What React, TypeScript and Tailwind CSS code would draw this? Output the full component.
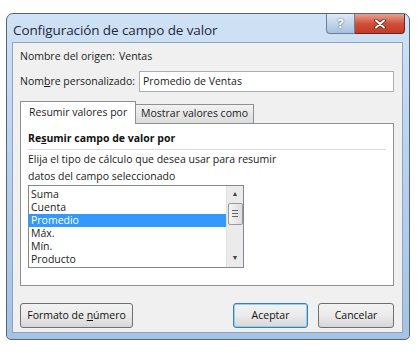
import React from "react";

const items = ["Suma", "Cuenta", "Promedio", "Máx.", "Mín.", "Producto"];

function CaptionButtons() {
  return (
    <div className="flex items-start">
      <div className="w-[29px] h-[20px] rounded-bl-[4px] border border-t-0 border-[#6d7f96] bg-gradient-to-b from-[#dfe9f5] via-[#c3d5ea] to-[#a9c0dc] flex items-center justify-center text-[12px] font-bold text-white [text-shadow:0_0_2px_#32465f]">
        ?
      </div>
      <div className="w-[50px] h-[20px] rounded-br-[4px] border border-t-0 border-l-0 border-[#6b2620] bg-gradient-to-b from-[#e8a190] via-[#d0503a] to-[#c23a26] flex items-center justify-center">
        <svg width="12" height="10" viewBox="0 0 12 10">
          <path d="M2 1.5 L10 8.5 M10 1.5 L2 8.5" stroke="#3a1a16" strokeWidth="3.6" strokeLinecap="round" />
          <path d="M2 1.5 L10 8.5 M10 1.5 L2 8.5" stroke="#ffffff" strokeWidth="2.2" strokeLinecap="round" />
        </svg>
      </div>
    </div>
  );
}

function Btn({ children, def = false, w }: { children: React.ReactNode; def?: boolean; w: string }) {
  return (
    <div
      className={`${w} h-[25px] rounded-[3px] border ${
        def ? "border-[#3c7fb1] shadow-[inset_0_0_0_1px_#8fd0f0]" : "border-[#707070]"
      } bg-gradient-to-b from-[#f2f2f2] via-[#ebebeb] to-[#d6d6d6] flex items-center justify-center text-[10.5px] text-[#111]`}
    >
      <span>{children}</span>
    </div>
  );
}

export default function App() {
  return (
    <div
      className="w-[419px] h-[356px] bg-white pt-[13px] pl-[6px]"
      style={{ fontFamily: '"Open Sans", "Noto Sans", sans-serif' }}
    >
      <div className="w-[404px] h-[327px] rounded-t-[7px] rounded-b-[5px] border border-[#55657a] bg-gradient-to-b from-[#d0e2f5] via-[#b8d0ec] to-[#a6c2e4] flex flex-col">
        {/* title bar */}
        <div className="h-[28px] flex justify-between pl-[6px] pr-[4px]">
          <div className="pt-[6px] text-[13.5px] text-[#1e2a3a] tracking-[-0.1px]">Configuración de campo de valor</div>
          <CaptionButtons />
        </div>

        {/* client area */}
        <div className="ml-[5px] mr-[6px] mb-[6px] flex-1 border border-[#8ea3bd] bg-[#f0f0f0] flex flex-col px-[7px] text-[10.5px] text-[#1b1b1b]">
          <div className="mt-[6px] h-[16px] flex items-center">
            <span className="w-[99px] shrink-0">Nombre del origen:</span>
            <span>Ventas</span>
          </div>

          <div className="mt-[6px] flex items-center">
            <span className="w-[119px] shrink-0">
              Nom<span className="underline">b</span>re personalizado:
            </span>
            <div className="flex-1 h-[21px] border border-[#abadb3] bg-white flex items-center pl-[3px] mr-[1px]">
              Promedio de Ventas
            </div>
          </div>

          {/* tabs */}
          <div className="mt-[8px] flex items-end h-[23px]">
            <div className="relative z-10 w-[116px] h-[23px] border border-b-0 border-[#8e8f8f] bg-white flex items-center pl-[8px] -mb-px">
              Resumir valores por
            </div>
            <div className="w-[118px] h-[19px] border border-l-0 border-b-0 border-[#8e8f8f] bg-gradient-to-b from-[#f2f2f2] to-[#dcdcdc] flex items-center pl-[5px]">
              Mostrar valores como
            </div>
          </div>

          <div className="mr-[1px] h-[163px] border border-[#8e8f8f] bg-white px-[7px] flex flex-col">
            <div className="mt-[7px] font-bold text-[10.5px] text-[#111]">
              Re<span className="underline">s</span>umir campo de valor por
            </div>
            <div className="mt-[2px] h-px bg-[#dcdcdc]" />
            <div className="mt-px leading-[17px]">
              Elija el tipo de cálculo que desea usar para resumir
              <br />
              datos del campo seleccionado
            </div>
            <div className="mt-0 w-[216px] h-[83px] border border-[#828790] flex">
              <div className="flex-1 pt-[2px] leading-[13px]">
                {items.map((it) => (
                  <div
                    key={it}
                    className={`h-[13px] pl-[2px] ${it === "Promedio" ? "bg-[#3399ff] text-white" : ""}`}
                  >
                    {it}
                  </div>
                ))}
              </div>
              <div className="w-[17px] bg-[#ebebeb] border-l border-[#e0e0e0] flex flex-col items-center">
                <div className="h-[17px] flex items-center justify-center text-[7px] text-[#444]">▲</div>
                <div className="w-[15px] h-[22px] border border-[#999] rounded-[2px] bg-gradient-to-r from-[#f4f4f4] to-[#dedede] flex flex-col items-center justify-center gap-[2px]">
                  <div className="w-[6px] h-px bg-[#666]" />
                  <div className="w-[6px] h-px bg-[#666]" />
                  <div className="w-[6px] h-px bg-[#666]" />
                </div>
                <div className="flex-1" />
                <div className="h-[17px] flex items-center justify-center text-[7px] text-[#444]">▼</div>
              </div>
            </div>
          </div>

          {/* bottom buttons */}
          <div className="mt-[17px] flex items-center">
            <Btn w="w-[113px]">
              Formato de <span className="underline">n</span>úmero
            </Btn>
            <div className="flex-1" />
            <Btn w="w-[75px]" def>
              Aceptar
            </Btn>
            <div className="w-[10px]" />
            <div className="mr-[1px]">
              <Btn w="w-[76px]">Cancelar</Btn>
            </div>
          </div>
        </div>
      </div>
    </div>
  );
}
